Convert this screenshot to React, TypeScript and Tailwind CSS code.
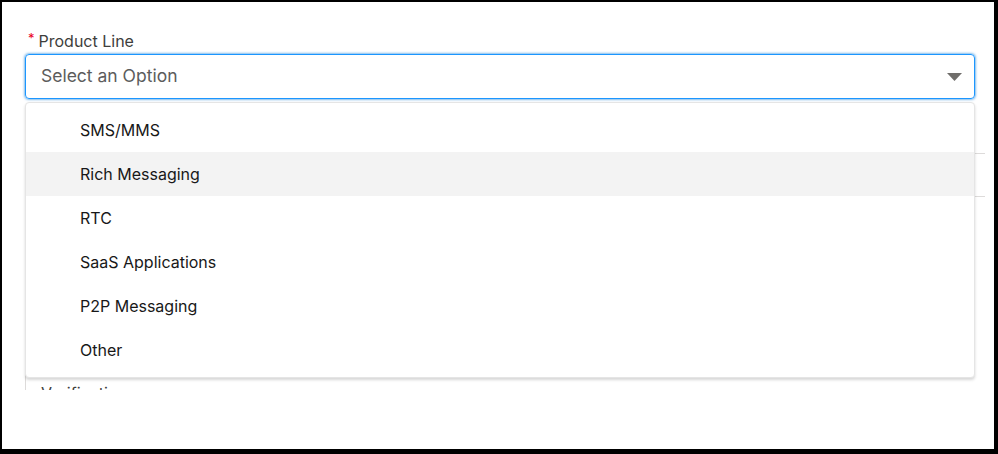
const options = ["SMS/MMS", "Rich Messaging", "RTC", "SaaS Applications", "P2P Messaging", "Other"];

export default function App() {
  const active = "Rich Messaging";

  return (
    <div className="w-[998px] h-[454px] bg-white border-l-2 border-t-2 border-r-4 border-b-[5px] border-black font-['Inter','Liberation_Sans',sans-serif] overflow-hidden">
      <div className="relative h-[388px] overflow-hidden pl-[23px] pr-[19px] pt-[28px]">
        <label className="flex items-center h-[22px] text-[16px] text-[#3e3e3c] pl-[3px]">
          <span className="text-[#ea001e] text-[13px] mr-[4px] -mt-[4px]">*</span>
          Product Line
        </label>
        <div className="mt-[2px] w-[950px] h-[45px] flex items-center justify-between rounded-[4px] border border-[#1b96ff] shadow-[0_0_3px_#0176d3] pl-[15px] pr-[12px]">
          <span className="text-[17.5px] text-[#5c5c5c]">Select an Option</span>
          <svg width="15" height="8" viewBox="0 0 15 8" className="mt-[1px]">
            <path d="M0 0h15L7.5 8z" fill="#706e6b" />
          </svg>
        </div>

        {/* fields sitting under the open list */}
        <div className="mt-[2px] border-l border-[#dddbda] h-[300px]">
          <div className="mt-[54px] w-[959px] h-[44px] border-y border-[#dddbda]" />
          <div className="mt-[186px] pl-[15px] text-[16px] leading-[20px] text-[#3e3e3c]">Verification</div>
        </div>

        <div className="absolute left-[23px] top-[100px] w-[950px] rounded-[4px] border border-[#e5e5e5] bg-white shadow-[0_2px_3px_rgba(0,0,0,0.16)] pt-[5px] pb-[5px]">
          {options.map((o) => (
            <div
              key={o}
              className={`h-[44px] flex items-center pl-[54px] text-[16px] text-[#181818] ${o === active ? "bg-[#f3f3f3]" : ""}`}
            >
              {o}
            </div>
          ))}
        </div>
      </div>
    </div>
  );
}
